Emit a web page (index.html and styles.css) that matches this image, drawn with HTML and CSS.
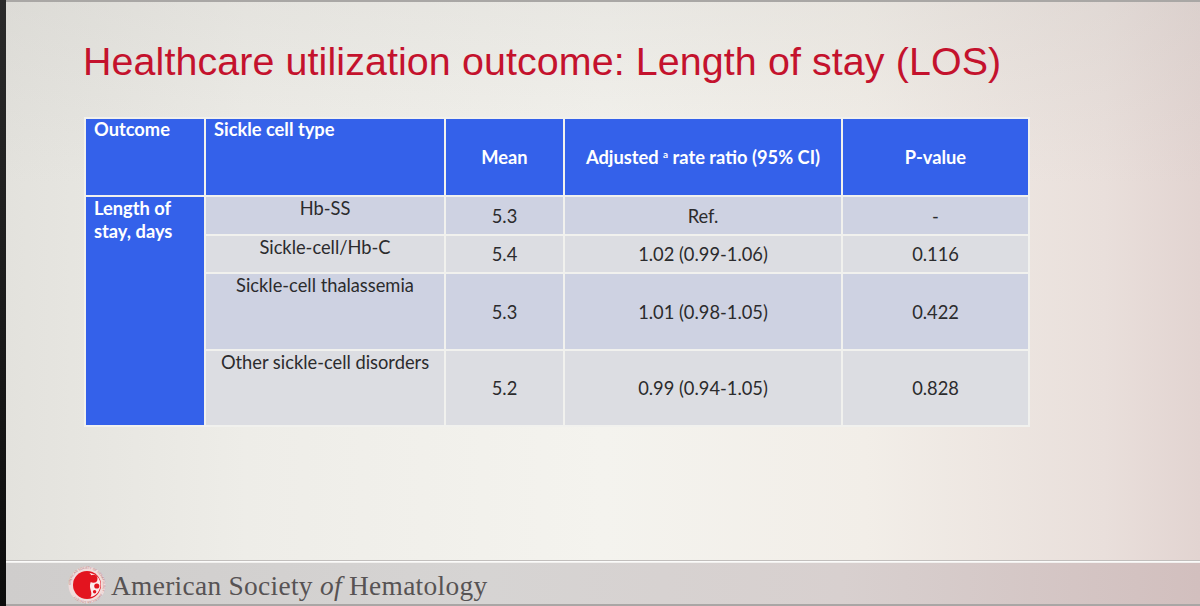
FILE: index.html
```html
<!DOCTYPE html>
<html lang="en">
<head>
<meta charset="utf-8">
<title>Healthcare utilization outcome: Length of stay (LOS)</title>
<link rel="stylesheet" href="styles.css">
</head>
<body>
<div class="frame">
  <div class="edge"></div>
  <div class="slide">
    <h1 class="title">Healthcare utilization outcome: Length of stay (LOS)</h1>
    <table class="data">
      <colgroup>
        <col class="c1"><col class="c2"><col class="c3"><col class="c4"><col class="c5">
      </colgroup>
      <thead>
        <tr class="head">
          <th class="tl">Outcome</th>
          <th class="tl">Sickle cell type</th>
          <th>Mean</th>
          <th>Adjusted <sup>a</sup> rate ratio (95% CI)</th>
          <th>P-value</th>
        </tr>
      </thead>
      <tbody>
        <tr class="r1 dark">
          <td class="outcome" rowspan="4">Length of<br>stay, days</td>
          <td class="type">Hb-SS</td>
          <td>5.3</td>
          <td>Ref.</td>
          <td>-</td>
        </tr>
        <tr class="r2 light">
          <td class="type">Sickle-cell/Hb-C</td>
          <td>5.4</td>
          <td>1.02 (0.99-1.06)</td>
          <td>0.116</td>
        </tr>
        <tr class="r3 dark">
          <td class="type">Sickle-cell thalassemia</td>
          <td>5.3</td>
          <td>1.01 (0.98-1.05)</td>
          <td>0.422</td>
        </tr>
        <tr class="r4 light">
          <td class="type">Other sickle-cell disorders</td>
          <td>5.2</td>
          <td>0.99 (0.94-1.05)</td>
          <td>0.828</td>
        </tr>
      </tbody>
    </table>
    <div class="spacer"></div>
    <footer class="footer">
      <svg class="logo" width="40" height="40" viewBox="0 0 40 40" aria-hidden="true">
        <defs>
          <path id="ring" d="M20,20 m-16.2,0 a16.2,16.2 0 1,1 32.4,0 a16.2,16.2 0 1,1 -32.4,0"/>
        </defs>
        <circle cx="20" cy="20" r="18.5" fill="#f1dcdc"/>
        <text class="ringtext"><textPath href="#ring">AMERICAN SOCIETY OF HEMATOLOGY · AMERICAN SOCIETY ·</textPath></text>
        <circle cx="20" cy="20" r="14" fill="#e3141f"/>
        <path d="M22.5 8 C29 8.5 33.5 13.5 33.5 19.5 C33.5 25.5 29.5 31 23.5 32 C26 28 22.5 24.5 23 20 C23.5 15.5 27.5 13 22.5 8 Z" fill="#fbecec"/>
        <circle cx="26.5" cy="13.8" r="4" fill="#e3141f"/>
        <circle cx="29.8" cy="21" r="2.6" fill="#e3141f"/>
        <circle cx="27.6" cy="26.8" r="1.7" fill="#e3141f"/>
      </svg>
      <span class="org">American Society <em>of</em> Hematology</span>
    </footer>
  </div>
</div>
</body>
</html>
```

FILE: styles.css
```css
html, body {
  margin: 0;
  padding: 0;
  height: 100%;
}
body {
  background: #111;
  overflow: hidden;
}
.frame {
  display: flex;
  width: 1200px;
  height: 606px;
}
.edge {
  width: 6px;
  background: linear-gradient(to bottom, #2a2a2a, #0c0c0c);
  flex: none;
}
.slide {
  flex: 1;
  display: flex;
  flex-direction: column;
  border-top: 2px solid #a9a7a5;
  background:
    linear-gradient(to bottom, rgba(200,198,194,0.25), rgba(255,255,255,0) 30%),
    linear-gradient(to right, #e3e2dd 0%, #eeede8 20%, #f4f3ee 50%, #f2eee8 72%, #e9dfdb 92%, #e2d4d1 100%);
}
.title {
  margin: 37px 0 0 77px;
  font-family: "Liberation Sans", Arial, sans-serif;
  font-weight: normal;
  font-size: 39.4px;
  line-height: 44px;
  color: #c4122d;
  letter-spacing: 0.1px;
}
.data {
  align-self: flex-start;
  margin: 34px 0 0 78px;
  width: 946px;
  table-layout: fixed;
  border-collapse: separate;
  border-spacing: 2px;
  background: #f1f1ee;
  font-family: Lato, "Open Sans", sans-serif;
  font-size: 18.3px;
  color: #2b2b2d;
}
.c1 { width: 118px; }
.c2 { width: 238px; }
.c3 { width: 117px; }
.c4 { width: 276px; }
.c5 { width: 185px; }
.data th {
  background: #3461ea;
  color: #fff;
  font-weight: bold;
  text-align: center;
  vertical-align: middle;
  padding: 0 4px;
  height: 76px;
  white-space: nowrap;
}
.data th.tl {
  text-align: left;
  vertical-align: top;
  padding: 0 8px;
  line-height: 20px;
}
.data sup {
  font-size: 10px;
  vertical-align: 6px;
}
.data td {
  text-align: center;
  vertical-align: middle;
  padding: 0 4px;
  white-space: nowrap;
}
.r1 td { height: 37px; }
.r2 td { height: 36px; }
.r3 td { height: 75px; }
.r4 td { height: 74px; }
.data td.type {
  vertical-align: top;
  line-height: 22px;
  padding-top: 0;
}
.dark td { background: #ced2e2; }
.light td { background: #dcdde2; }
.data td.outcome {
  background: #3461ea;
  color: #fff;
  font-weight: bold;
  text-align: left;
  vertical-align: top;
  line-height: 23px;
  padding: 0 8px;
}
.spacer { flex: 1; }
.footer {
  height: 43px;
  flex: none;
  display: flex;
  align-items: center;
  gap: 4px;
  padding-left: 61px;
  border-top: 1px solid #c2bfbd;
  box-shadow: inset 0 1px 0 #fbfbfa, inset 0 2px 0 #f1f0ee;
  background: linear-gradient(to right, #cfcdcc 0%, #d6d4d3 40%, #d8d0cf 70%, #d2bfbe 100%);
  border-bottom: 2px solid #a9a6a5;
}
.logo {
  flex: none;
  margin-top: 5px;
}
.ringtext {
  font-family: "DejaVu Sans", sans-serif;
  font-size: 3px;
  fill: #b07a7a;
}
.org {
  font-family: "Liberation Serif", "Times New Roman", serif;
  font-size: 27.4px;
  color: #575354;
  letter-spacing: 0.3px;
  margin-top: 7px;
}
.org em {
  font-style: italic;
}
```
